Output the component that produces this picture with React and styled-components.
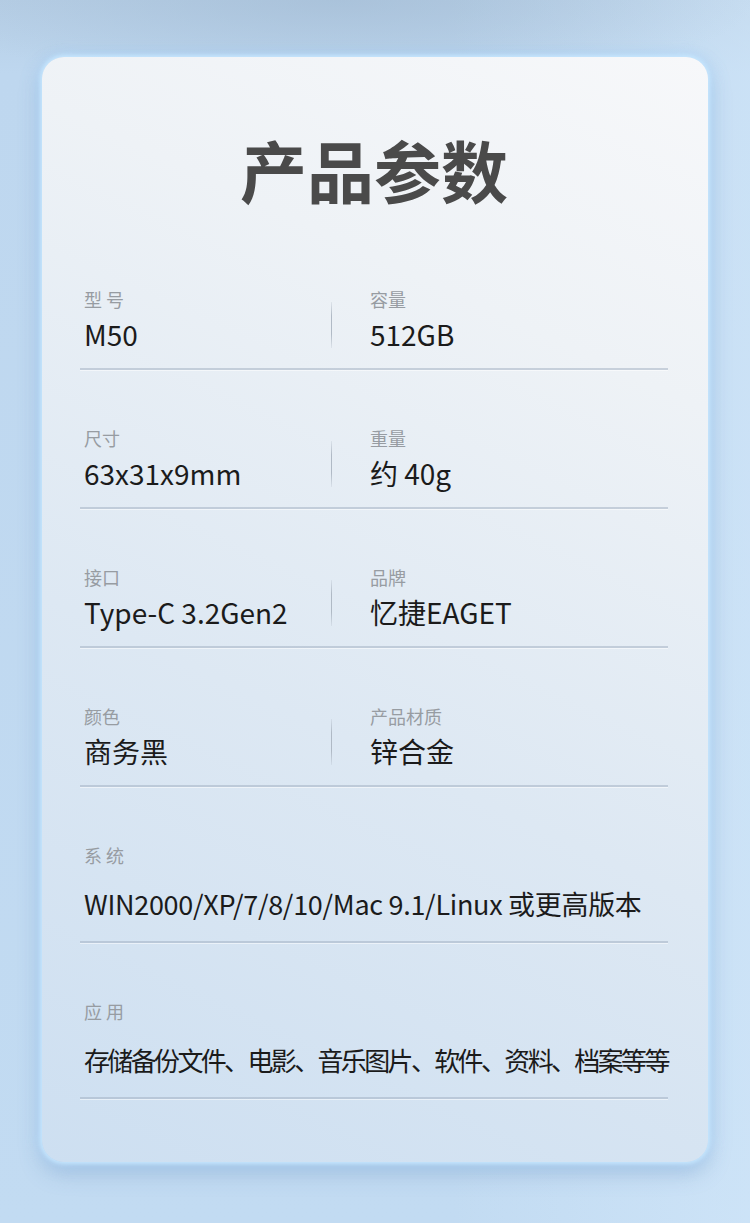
import React from "react";
import styled, { createGlobalStyle } from "styled-components";

const Global = createGlobalStyle`
  html, body { margin: 0; padding: 0; }
  body {
    width: 750px;
    height: 1223px;
    overflow: hidden;
    font-family: "Noto Sans CJK SC", "Noto Sans", sans-serif;
    background:
      radial-gradient(ellipse 420px 90px at 45% 0%, rgba(160,185,210,0.55), rgba(160,185,210,0) 100%),
      linear-gradient(90deg, rgba(255,255,255,0) 60%, rgba(215,235,252,0.5) 100%),
      linear-gradient(180deg, #b6cee5 0%, #bed7ef 6%, #c2dbf2 100%);
  }
`;

const Page = styled.div`
  padding: 57px 42px 61px;
  box-sizing: border-box;
  height: 1223px;
`;

const Card = styled.section`
  height: 1105px;
  box-sizing: border-box;
  border-radius: 22px;
  padding: 0 40px 0 38px;
  background: linear-gradient(205deg, #f7f8fa 0%, #eef2f6 25%, #dde8f3 60%, #cddff1 100%);
  box-shadow:
    0 0 4px 2px rgba(200, 232, 255, 0.95),
    0 0 14px 4px rgba(175, 215, 250, 0.6),
    0 10px 22px rgba(95, 135, 185, 0.38);
`;

const Title = styled.h1`
  margin: 0 0 26px;
  padding-top: 76px;
  text-align: center;
  font-size: 67px;
  line-height: 72px;
  font-weight: 700;
  color: #4a4a4a;
`;

const Row = styled.div`
  display: flex;
  padding: 57px 0 ${(p) => (p.$wide ? "19px" : "16px")} 4px;
  border-bottom: 2px solid rgba(160, 174, 192, 0.5);
  box-shadow: 0 1px 0 rgba(255, 255, 255, 0.5);
`;

const Cell = styled.div`
  display: flex;
  flex-direction: column;
  gap: ${(p) => (p.$wide ? "20px" : "6px")};
  flex: ${(p) => (p.$fixed ? "0 0 247px" : "1 1 auto")};
  min-width: 0;
`;

const Divider = styled.div`
  flex: 0 0 1px;
  margin: 14px 38px 4px 0;
  background: linear-gradient(180deg, rgba(170,180,192,0.2), rgba(170,180,192,0.9) 30%, rgba(170,180,192,0.9) 70%, rgba(170,180,192,0.2));
`;

const Label = styled.div`
  font-size: 18px;
  line-height: 22px;
  color: #979ca2;
  white-space: nowrap;
`;

const Value = styled.div`
  font-size: ${(p) => p.$size || "28px"};
  line-height: 36px;
  color: #1b1b1b;
  white-space: nowrap;
  letter-spacing: ${(p) => p.$ls || "0"};
`;

const pairs = [
  [["型 号", "M50"], ["容量", "512GB"]],
  [["尺寸", "63x31x9mm"], ["重量", "约 40g"]],
  [["接口", "Type-C 3.2Gen2"], ["品牌", "忆捷EAGET"]],
  [["颜色", "商务黑"], ["产品材质", "锌合金"]],
];

const wides = [
  { label: "系 统", value: "WIN2000/XP/7/8/10/Mac 9.1/Linux 或更高版本", size: "27px", ls: "-0.3px" },
  { label: "应 用", value: "存储备份文件、电影、音乐图片、软件、资料、档案等等", size: "26px", ls: "-2.65px" },
];

export default function App() {
  return (
    <>
      <Global />
      <Page>
        <Card>
          <Title>产品参数</Title>
          {pairs.map(([a, b], i) => (
            <Row key={i}>
              <Cell $fixed>
                <Label>{a[0]}</Label>
                <Value>{a[1]}</Value>
              </Cell>
              <Divider />
              <Cell>
                <Label>{b[0]}</Label>
                <Value>{b[1]}</Value>
              </Cell>
            </Row>
          ))}
          {wides.map((w) => (
            <Row key={w.label} $wide>
              <Cell $wide>
                <Label>{w.label}</Label>
                <Value $size={w.size} $ls={w.ls}>{w.value}</Value>
              </Cell>
            </Row>
          ))}
        </Card>
      </Page>
    </>
  );
}
